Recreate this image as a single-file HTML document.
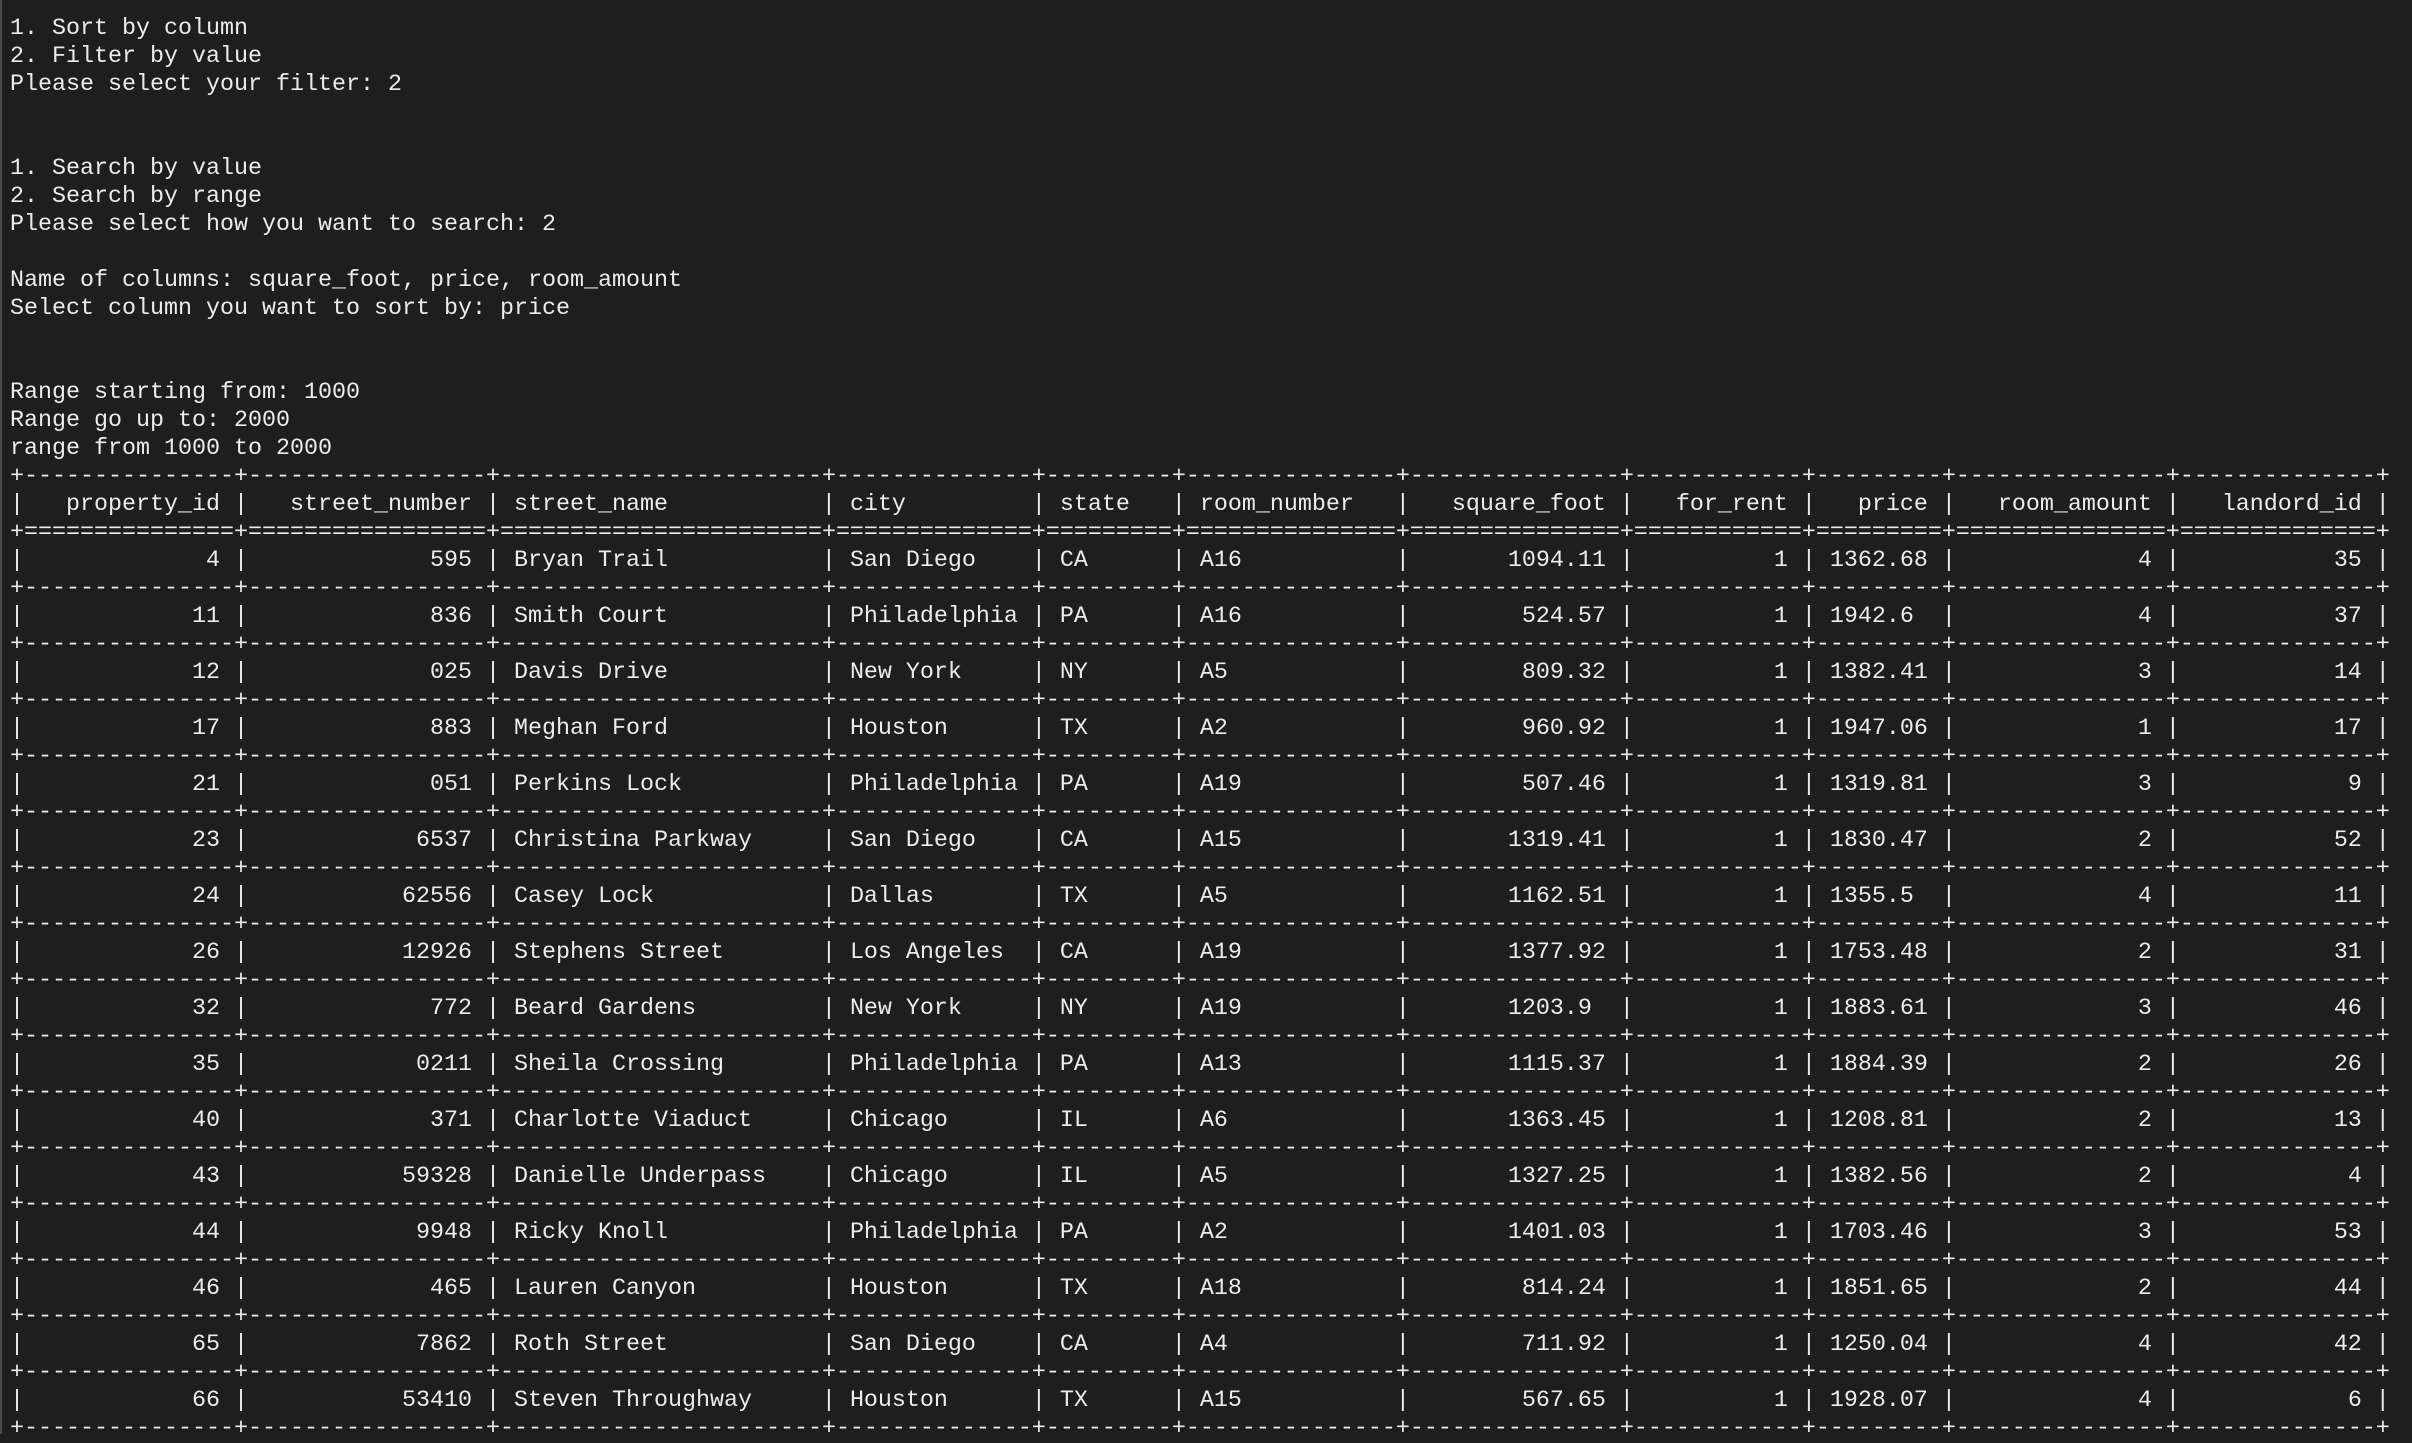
<!DOCTYPE html>
<html><head><meta charset="utf-8">
<style>
html,body{margin:0;padding:0;background:#1e1e1e;}
body{width:2412px;height:1434px;overflow:hidden;border-left:2px solid #4a4a4a;box-sizing:border-box;}
pre{margin:0;padding:15px 0 0 8px;font-family:"Liberation Mono",monospace;font-size:23.34px;line-height:28px;color:#ececec;}
pre span{display:inline-block;vertical-align:top;height:28px;white-space:nowrap;overflow:hidden;}
.r{text-align:right}.l{text-align:left}
.w7{width:7ch}.w9{width:9ch}.w10{width:10ch}.w12{width:12ch}.w13{width:13ch}.w14{width:14ch}.w15{width:15ch}.w17{width:17ch}.w21{width:21ch}.w23{width:23ch}
</style></head><body><pre>1. Sort by column
2. Filter by value
Please select your filter: 2


1. Search by value
2. Search by range
Please select how you want to search: 2

Name of columns: square_foot, price, room_amount
Select column you want to sort by: price


Range starting from: 1000
Range go up to: 2000
range from 1000 to 2000
+<span class="w15">-------------------------</span>+<span class="w17">-------------------------</span>+<span class="w23">-------------------------</span>+<span class="w14">-------------------------</span>+<span class="w9">-------------------------</span>+<span class="w15">-------------------------</span>+<span class="w15">-------------------------</span>+<span class="w12">-------------------------</span>+<span class="w9">-------------------------</span>+<span class="w15">-------------------------</span>+<span class="w14">-------------------------</span>+
| <span class="w13 r">property_id</span> | <span class="w15 r">street_number</span> | <span class="w21 l">street_name</span> | <span class="w12 l">city</span> | <span class="w7 l">state</span> | <span class="w13 l">room_number</span> | <span class="w13 r">square_foot</span> | <span class="w10 r">for_rent</span> | <span class="w7 r">price</span> | <span class="w13 r">room_amount</span> | <span class="w12 r">landord_id</span> |
+<span class="w15">=========================</span>+<span class="w17">=========================</span>+<span class="w23">=========================</span>+<span class="w14">=========================</span>+<span class="w9">=========================</span>+<span class="w15">=========================</span>+<span class="w15">=========================</span>+<span class="w12">=========================</span>+<span class="w9">=========================</span>+<span class="w15">=========================</span>+<span class="w14">=========================</span>+
| <span class="w13 r">4</span> | <span class="w15 r">595</span> | <span class="w21 l">Bryan Trail</span> | <span class="w12 l">San Diego</span> | <span class="w7 l">CA</span> | <span class="w13 l">A16</span> | <span class="w13 r">1094.11</span> | <span class="w10 r">1</span> | <span class="w7 l">1362.68</span> | <span class="w13 r">4</span> | <span class="w12 r">35</span> |
+<span class="w15">-------------------------</span>+<span class="w17">-------------------------</span>+<span class="w23">-------------------------</span>+<span class="w14">-------------------------</span>+<span class="w9">-------------------------</span>+<span class="w15">-------------------------</span>+<span class="w15">-------------------------</span>+<span class="w12">-------------------------</span>+<span class="w9">-------------------------</span>+<span class="w15">-------------------------</span>+<span class="w14">-------------------------</span>+
| <span class="w13 r">11</span> | <span class="w15 r">836</span> | <span class="w21 l">Smith Court</span> | <span class="w12 l">Philadelphia</span> | <span class="w7 l">PA</span> | <span class="w13 l">A16</span> | <span class="w13 r">524.57</span> | <span class="w10 r">1</span> | <span class="w7 l">1942.6</span> | <span class="w13 r">4</span> | <span class="w12 r">37</span> |
+<span class="w15">-------------------------</span>+<span class="w17">-------------------------</span>+<span class="w23">-------------------------</span>+<span class="w14">-------------------------</span>+<span class="w9">-------------------------</span>+<span class="w15">-------------------------</span>+<span class="w15">-------------------------</span>+<span class="w12">-------------------------</span>+<span class="w9">-------------------------</span>+<span class="w15">-------------------------</span>+<span class="w14">-------------------------</span>+
| <span class="w13 r">12</span> | <span class="w15 r">025</span> | <span class="w21 l">Davis Drive</span> | <span class="w12 l">New York</span> | <span class="w7 l">NY</span> | <span class="w13 l">A5</span> | <span class="w13 r">809.32</span> | <span class="w10 r">1</span> | <span class="w7 l">1382.41</span> | <span class="w13 r">3</span> | <span class="w12 r">14</span> |
+<span class="w15">-------------------------</span>+<span class="w17">-------------------------</span>+<span class="w23">-------------------------</span>+<span class="w14">-------------------------</span>+<span class="w9">-------------------------</span>+<span class="w15">-------------------------</span>+<span class="w15">-------------------------</span>+<span class="w12">-------------------------</span>+<span class="w9">-------------------------</span>+<span class="w15">-------------------------</span>+<span class="w14">-------------------------</span>+
| <span class="w13 r">17</span> | <span class="w15 r">883</span> | <span class="w21 l">Meghan Ford</span> | <span class="w12 l">Houston</span> | <span class="w7 l">TX</span> | <span class="w13 l">A2</span> | <span class="w13 r">960.92</span> | <span class="w10 r">1</span> | <span class="w7 l">1947.06</span> | <span class="w13 r">1</span> | <span class="w12 r">17</span> |
+<span class="w15">-------------------------</span>+<span class="w17">-------------------------</span>+<span class="w23">-------------------------</span>+<span class="w14">-------------------------</span>+<span class="w9">-------------------------</span>+<span class="w15">-------------------------</span>+<span class="w15">-------------------------</span>+<span class="w12">-------------------------</span>+<span class="w9">-------------------------</span>+<span class="w15">-------------------------</span>+<span class="w14">-------------------------</span>+
| <span class="w13 r">21</span> | <span class="w15 r">051</span> | <span class="w21 l">Perkins Lock</span> | <span class="w12 l">Philadelphia</span> | <span class="w7 l">PA</span> | <span class="w13 l">A19</span> | <span class="w13 r">507.46</span> | <span class="w10 r">1</span> | <span class="w7 l">1319.81</span> | <span class="w13 r">3</span> | <span class="w12 r">9</span> |
+<span class="w15">-------------------------</span>+<span class="w17">-------------------------</span>+<span class="w23">-------------------------</span>+<span class="w14">-------------------------</span>+<span class="w9">-------------------------</span>+<span class="w15">-------------------------</span>+<span class="w15">-------------------------</span>+<span class="w12">-------------------------</span>+<span class="w9">-------------------------</span>+<span class="w15">-------------------------</span>+<span class="w14">-------------------------</span>+
| <span class="w13 r">23</span> | <span class="w15 r">6537</span> | <span class="w21 l">Christina Parkway</span> | <span class="w12 l">San Diego</span> | <span class="w7 l">CA</span> | <span class="w13 l">A15</span> | <span class="w13 r">1319.41</span> | <span class="w10 r">1</span> | <span class="w7 l">1830.47</span> | <span class="w13 r">2</span> | <span class="w12 r">52</span> |
+<span class="w15">-------------------------</span>+<span class="w17">-------------------------</span>+<span class="w23">-------------------------</span>+<span class="w14">-------------------------</span>+<span class="w9">-------------------------</span>+<span class="w15">-------------------------</span>+<span class="w15">-------------------------</span>+<span class="w12">-------------------------</span>+<span class="w9">-------------------------</span>+<span class="w15">-------------------------</span>+<span class="w14">-------------------------</span>+
| <span class="w13 r">24</span> | <span class="w15 r">62556</span> | <span class="w21 l">Casey Lock</span> | <span class="w12 l">Dallas</span> | <span class="w7 l">TX</span> | <span class="w13 l">A5</span> | <span class="w13 r">1162.51</span> | <span class="w10 r">1</span> | <span class="w7 l">1355.5</span> | <span class="w13 r">4</span> | <span class="w12 r">11</span> |
+<span class="w15">-------------------------</span>+<span class="w17">-------------------------</span>+<span class="w23">-------------------------</span>+<span class="w14">-------------------------</span>+<span class="w9">-------------------------</span>+<span class="w15">-------------------------</span>+<span class="w15">-------------------------</span>+<span class="w12">-------------------------</span>+<span class="w9">-------------------------</span>+<span class="w15">-------------------------</span>+<span class="w14">-------------------------</span>+
| <span class="w13 r">26</span> | <span class="w15 r">12926</span> | <span class="w21 l">Stephens Street</span> | <span class="w12 l">Los Angeles</span> | <span class="w7 l">CA</span> | <span class="w13 l">A19</span> | <span class="w13 r">1377.92</span> | <span class="w10 r">1</span> | <span class="w7 l">1753.48</span> | <span class="w13 r">2</span> | <span class="w12 r">31</span> |
+<span class="w15">-------------------------</span>+<span class="w17">-------------------------</span>+<span class="w23">-------------------------</span>+<span class="w14">-------------------------</span>+<span class="w9">-------------------------</span>+<span class="w15">-------------------------</span>+<span class="w15">-------------------------</span>+<span class="w12">-------------------------</span>+<span class="w9">-------------------------</span>+<span class="w15">-------------------------</span>+<span class="w14">-------------------------</span>+
| <span class="w13 r">32</span> | <span class="w15 r">772</span> | <span class="w21 l">Beard Gardens</span> | <span class="w12 l">New York</span> | <span class="w7 l">NY</span> | <span class="w13 l">A19</span> | <span class="w13 r">1203.9&nbsp;</span> | <span class="w10 r">1</span> | <span class="w7 l">1883.61</span> | <span class="w13 r">3</span> | <span class="w12 r">46</span> |
+<span class="w15">-------------------------</span>+<span class="w17">-------------------------</span>+<span class="w23">-------------------------</span>+<span class="w14">-------------------------</span>+<span class="w9">-------------------------</span>+<span class="w15">-------------------------</span>+<span class="w15">-------------------------</span>+<span class="w12">-------------------------</span>+<span class="w9">-------------------------</span>+<span class="w15">-------------------------</span>+<span class="w14">-------------------------</span>+
| <span class="w13 r">35</span> | <span class="w15 r">0211</span> | <span class="w21 l">Sheila Crossing</span> | <span class="w12 l">Philadelphia</span> | <span class="w7 l">PA</span> | <span class="w13 l">A13</span> | <span class="w13 r">1115.37</span> | <span class="w10 r">1</span> | <span class="w7 l">1884.39</span> | <span class="w13 r">2</span> | <span class="w12 r">26</span> |
+<span class="w15">-------------------------</span>+<span class="w17">-------------------------</span>+<span class="w23">-------------------------</span>+<span class="w14">-------------------------</span>+<span class="w9">-------------------------</span>+<span class="w15">-------------------------</span>+<span class="w15">-------------------------</span>+<span class="w12">-------------------------</span>+<span class="w9">-------------------------</span>+<span class="w15">-------------------------</span>+<span class="w14">-------------------------</span>+
| <span class="w13 r">40</span> | <span class="w15 r">371</span> | <span class="w21 l">Charlotte Viaduct</span> | <span class="w12 l">Chicago</span> | <span class="w7 l">IL</span> | <span class="w13 l">A6</span> | <span class="w13 r">1363.45</span> | <span class="w10 r">1</span> | <span class="w7 l">1208.81</span> | <span class="w13 r">2</span> | <span class="w12 r">13</span> |
+<span class="w15">-------------------------</span>+<span class="w17">-------------------------</span>+<span class="w23">-------------------------</span>+<span class="w14">-------------------------</span>+<span class="w9">-------------------------</span>+<span class="w15">-------------------------</span>+<span class="w15">-------------------------</span>+<span class="w12">-------------------------</span>+<span class="w9">-------------------------</span>+<span class="w15">-------------------------</span>+<span class="w14">-------------------------</span>+
| <span class="w13 r">43</span> | <span class="w15 r">59328</span> | <span class="w21 l">Danielle Underpass</span> | <span class="w12 l">Chicago</span> | <span class="w7 l">IL</span> | <span class="w13 l">A5</span> | <span class="w13 r">1327.25</span> | <span class="w10 r">1</span> | <span class="w7 l">1382.56</span> | <span class="w13 r">2</span> | <span class="w12 r">4</span> |
+<span class="w15">-------------------------</span>+<span class="w17">-------------------------</span>+<span class="w23">-------------------------</span>+<span class="w14">-------------------------</span>+<span class="w9">-------------------------</span>+<span class="w15">-------------------------</span>+<span class="w15">-------------------------</span>+<span class="w12">-------------------------</span>+<span class="w9">-------------------------</span>+<span class="w15">-------------------------</span>+<span class="w14">-------------------------</span>+
| <span class="w13 r">44</span> | <span class="w15 r">9948</span> | <span class="w21 l">Ricky Knoll</span> | <span class="w12 l">Philadelphia</span> | <span class="w7 l">PA</span> | <span class="w13 l">A2</span> | <span class="w13 r">1401.03</span> | <span class="w10 r">1</span> | <span class="w7 l">1703.46</span> | <span class="w13 r">3</span> | <span class="w12 r">53</span> |
+<span class="w15">-------------------------</span>+<span class="w17">-------------------------</span>+<span class="w23">-------------------------</span>+<span class="w14">-------------------------</span>+<span class="w9">-------------------------</span>+<span class="w15">-------------------------</span>+<span class="w15">-------------------------</span>+<span class="w12">-------------------------</span>+<span class="w9">-------------------------</span>+<span class="w15">-------------------------</span>+<span class="w14">-------------------------</span>+
| <span class="w13 r">46</span> | <span class="w15 r">465</span> | <span class="w21 l">Lauren Canyon</span> | <span class="w12 l">Houston</span> | <span class="w7 l">TX</span> | <span class="w13 l">A18</span> | <span class="w13 r">814.24</span> | <span class="w10 r">1</span> | <span class="w7 l">1851.65</span> | <span class="w13 r">2</span> | <span class="w12 r">44</span> |
+<span class="w15">-------------------------</span>+<span class="w17">-------------------------</span>+<span class="w23">-------------------------</span>+<span class="w14">-------------------------</span>+<span class="w9">-------------------------</span>+<span class="w15">-------------------------</span>+<span class="w15">-------------------------</span>+<span class="w12">-------------------------</span>+<span class="w9">-------------------------</span>+<span class="w15">-------------------------</span>+<span class="w14">-------------------------</span>+
| <span class="w13 r">65</span> | <span class="w15 r">7862</span> | <span class="w21 l">Roth Street</span> | <span class="w12 l">San Diego</span> | <span class="w7 l">CA</span> | <span class="w13 l">A4</span> | <span class="w13 r">711.92</span> | <span class="w10 r">1</span> | <span class="w7 l">1250.04</span> | <span class="w13 r">4</span> | <span class="w12 r">42</span> |
+<span class="w15">-------------------------</span>+<span class="w17">-------------------------</span>+<span class="w23">-------------------------</span>+<span class="w14">-------------------------</span>+<span class="w9">-------------------------</span>+<span class="w15">-------------------------</span>+<span class="w15">-------------------------</span>+<span class="w12">-------------------------</span>+<span class="w9">-------------------------</span>+<span class="w15">-------------------------</span>+<span class="w14">-------------------------</span>+
| <span class="w13 r">66</span> | <span class="w15 r">53410</span> | <span class="w21 l">Steven Throughway</span> | <span class="w12 l">Houston</span> | <span class="w7 l">TX</span> | <span class="w13 l">A15</span> | <span class="w13 r">567.65</span> | <span class="w10 r">1</span> | <span class="w7 l">1928.07</span> | <span class="w13 r">4</span> | <span class="w12 r">6</span> |
+<span class="w15">-------------------------</span>+<span class="w17">-------------------------</span>+<span class="w23">-------------------------</span>+<span class="w14">-------------------------</span>+<span class="w9">-------------------------</span>+<span class="w15">-------------------------</span>+<span class="w15">-------------------------</span>+<span class="w12">-------------------------</span>+<span class="w9">-------------------------</span>+<span class="w15">-------------------------</span>+<span class="w14">-------------------------</span>+
</pre></body></html>
